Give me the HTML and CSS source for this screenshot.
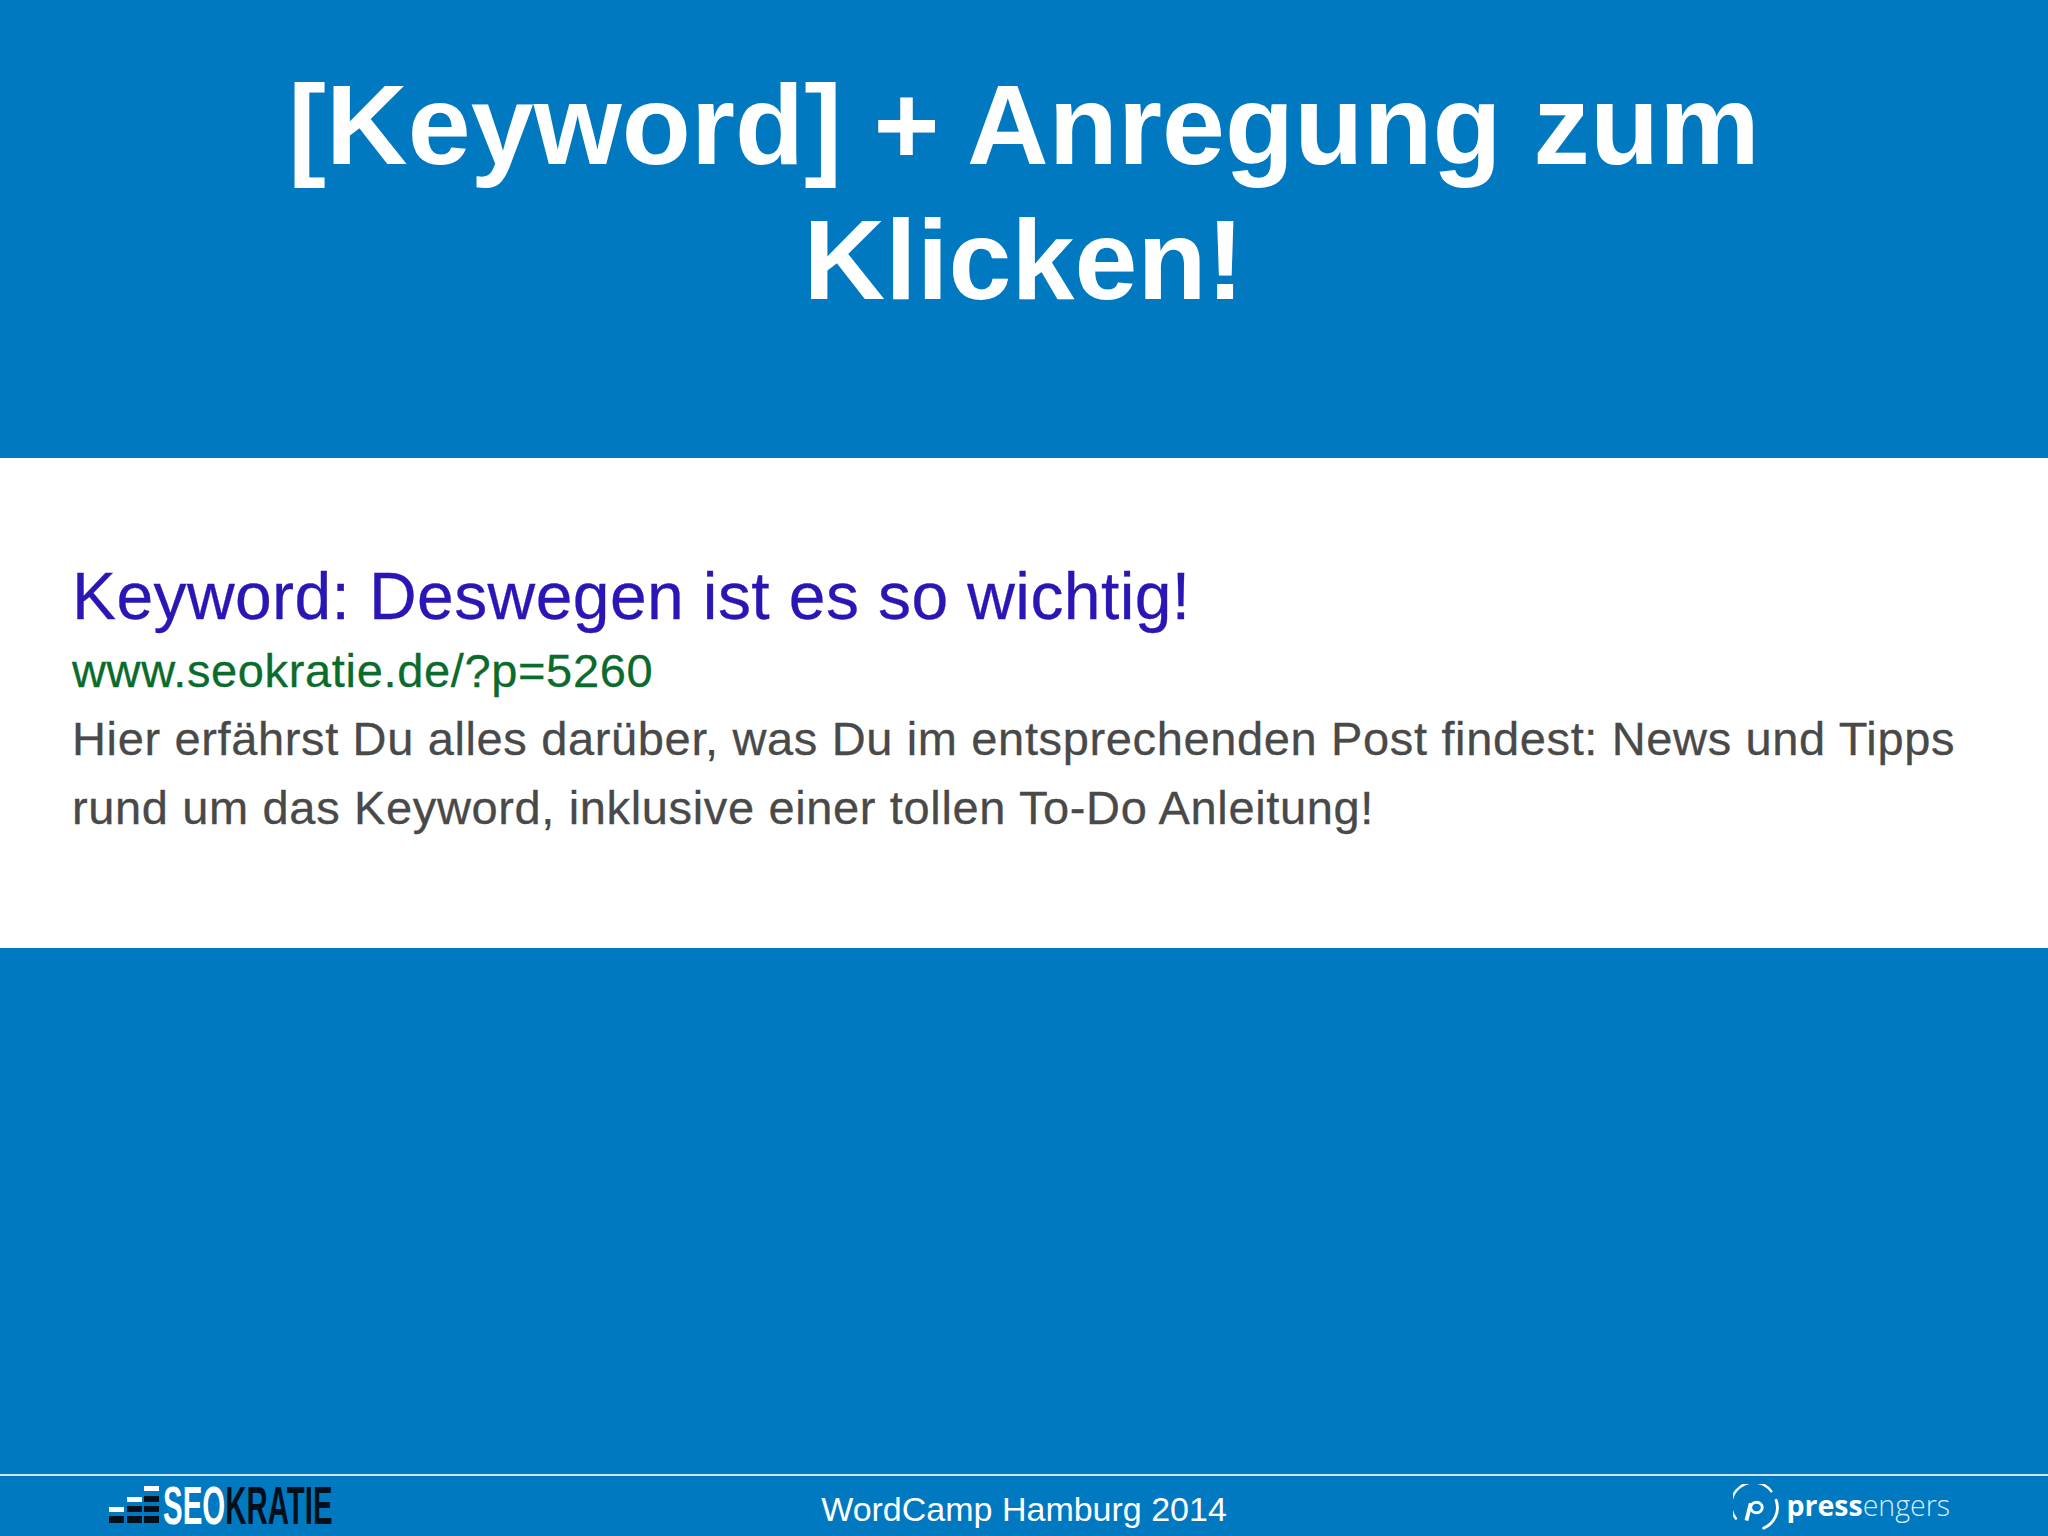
FILE: index.html
```html
<!DOCTYPE html>
<html lang="de">
<head>
<meta charset="utf-8">
<title>[Keyword] + Anregung zum Klicken!</title>
<link rel="stylesheet" href="styles.css">
</head>
<body>
<main class="slide">
  <header class="head">
    <h1 class="title">[Keyword] + Anregung zum<br>Klicken!</h1>
  </header>
  <section class="panel">
    <h2 class="res-title">Keyword: Deswegen ist es so wichtig!</h2>
    <p class="res-url">www.seokratie.de/?p=5260</p>
    <p class="res-desc">Hier erfährst Du alles darüber, was Du im entsprechenden Post findest: News und Tipps<br>rund um das Keyword, inklusive einer tollen To-Do Anleitung!</p>
  </section>
  <div class="spacer"></div>
  <footer class="foot">
    <div class="seo">
      <svg class="seo-bars" width="50" height="37" viewBox="0 0 50 37" aria-hidden="true">
        <g fill="#fff">
          <rect x="0" y="21" width="15" height="5"/>
          <rect x="18" y="11" width="15" height="5"/>
          <rect x="35" y="0" width="15" height="5"/>
        </g>
        <g fill="#03101c">
          <rect x="0" y="30" width="15" height="7"/>
          <rect x="18" y="30" width="15" height="7"/>
          <rect x="35" y="30" width="15" height="7"/>
          <rect x="18" y="20" width="15" height="6"/>
          <rect x="35" y="20" width="15" height="6"/>
          <rect x="35" y="10" width="15" height="6"/>
        </g>
      </svg>
      <span class="seo-word"><span class="seo-a">SEO</span><span class="seo-b">KRATIE</span></span>
    </div>
    <div class="event">WordCamp Hamburg 2014</div>
    <div class="press">
      <svg class="press-mark" width="46" height="46" viewBox="0 0 48 48" aria-hidden="true">
        <path d="M3 36A23 23 0 0 1 40 7.500" fill="none" stroke="#fff" stroke-width="2.500" stroke-linecap="round"/>
        <path d="M45 17A23 23 0 0 1 32 46" fill="none" stroke="#fff" stroke-width="3" stroke-linecap="round"/>
        <path d="M14 38L18.500 20" fill="none" stroke="#fff" stroke-width="4"/>
        <ellipse cx="24.500" cy="24.500" rx="6" ry="5.500" fill="none" stroke="#fff" stroke-width="3"/>
      </svg>
      <span class="press-word"><b>press</b>engers</span>
    </div>
  </footer>
</main>
</body>
</html>
```

FILE: styles.css
```css
* { box-sizing: border-box; }
html, body { margin: 0; padding: 0; }
body { width: 2048px; height: 1536px; overflow: hidden; background: #0079c1; font-family: "Liberation Sans", Arial, sans-serif; }
.slide { width: 2048px; height: 1536px; display: flex; flex-direction: column; }
.head { height: 458px; padding-top: 58px; flex: none; }
.title { margin: 0; color: #fff; text-align: center; font-size: 113px; line-height: 134.500px; letter-spacing: 0.150px; font-weight: 700; }
.panel { height: 490px; flex: none; background: #fff; padding: 99px 0 0 72px; -webkit-text-stroke: 0.300px currentColor; }
.res-title { margin: 0; font-weight: 400; font-size: 66px; line-height: 78px; letter-spacing: 0.400px; color: #2a16b4; }
.res-url { margin: 4px 0 0; font-size: 47px; line-height: 64.500px; letter-spacing: 0.650px; color: #0b6b2c; }
.res-desc { margin: 0; font-size: 47px; line-height: 69.500px; letter-spacing: 0.640px; color: #494949; }
.spacer { flex: 1; }
.foot { height: 62px; flex: none; border-top: 2px solid #cfe6f5; display: grid; grid-template-columns: 1fr auto 1fr; align-items: center; color: #fff; }
.seo { display: flex; align-items: flex-end; gap: 4px; padding-left: 109px; padding-bottom: 8px; }
.seo-bars { display: block; }
.seo-word { font-weight: 700; font-size: 54px; line-height: 37px; margin-bottom: -1px; display: inline-block; transform: scaleX(0.545); transform-origin: left center; }
.seo-a { color: #fff; }
.seo-b { color: #03101c; }
.event { font-size: 34px; line-height: 62px; padding-top: 2px; }
.press { display: flex; justify-content: flex-end; align-items: center; gap: 8px; padding-right: 98px; padding-bottom: 2px; }
.press-mark { display: block; }
.press-word { font-family: "Open Sans", sans-serif; font-weight: 300; font-size: 28.500px; line-height: 40px; margin-top: -4px; color: #d8ebf7; }
.press-word b { font-weight: 700; color: #fff; }
```
